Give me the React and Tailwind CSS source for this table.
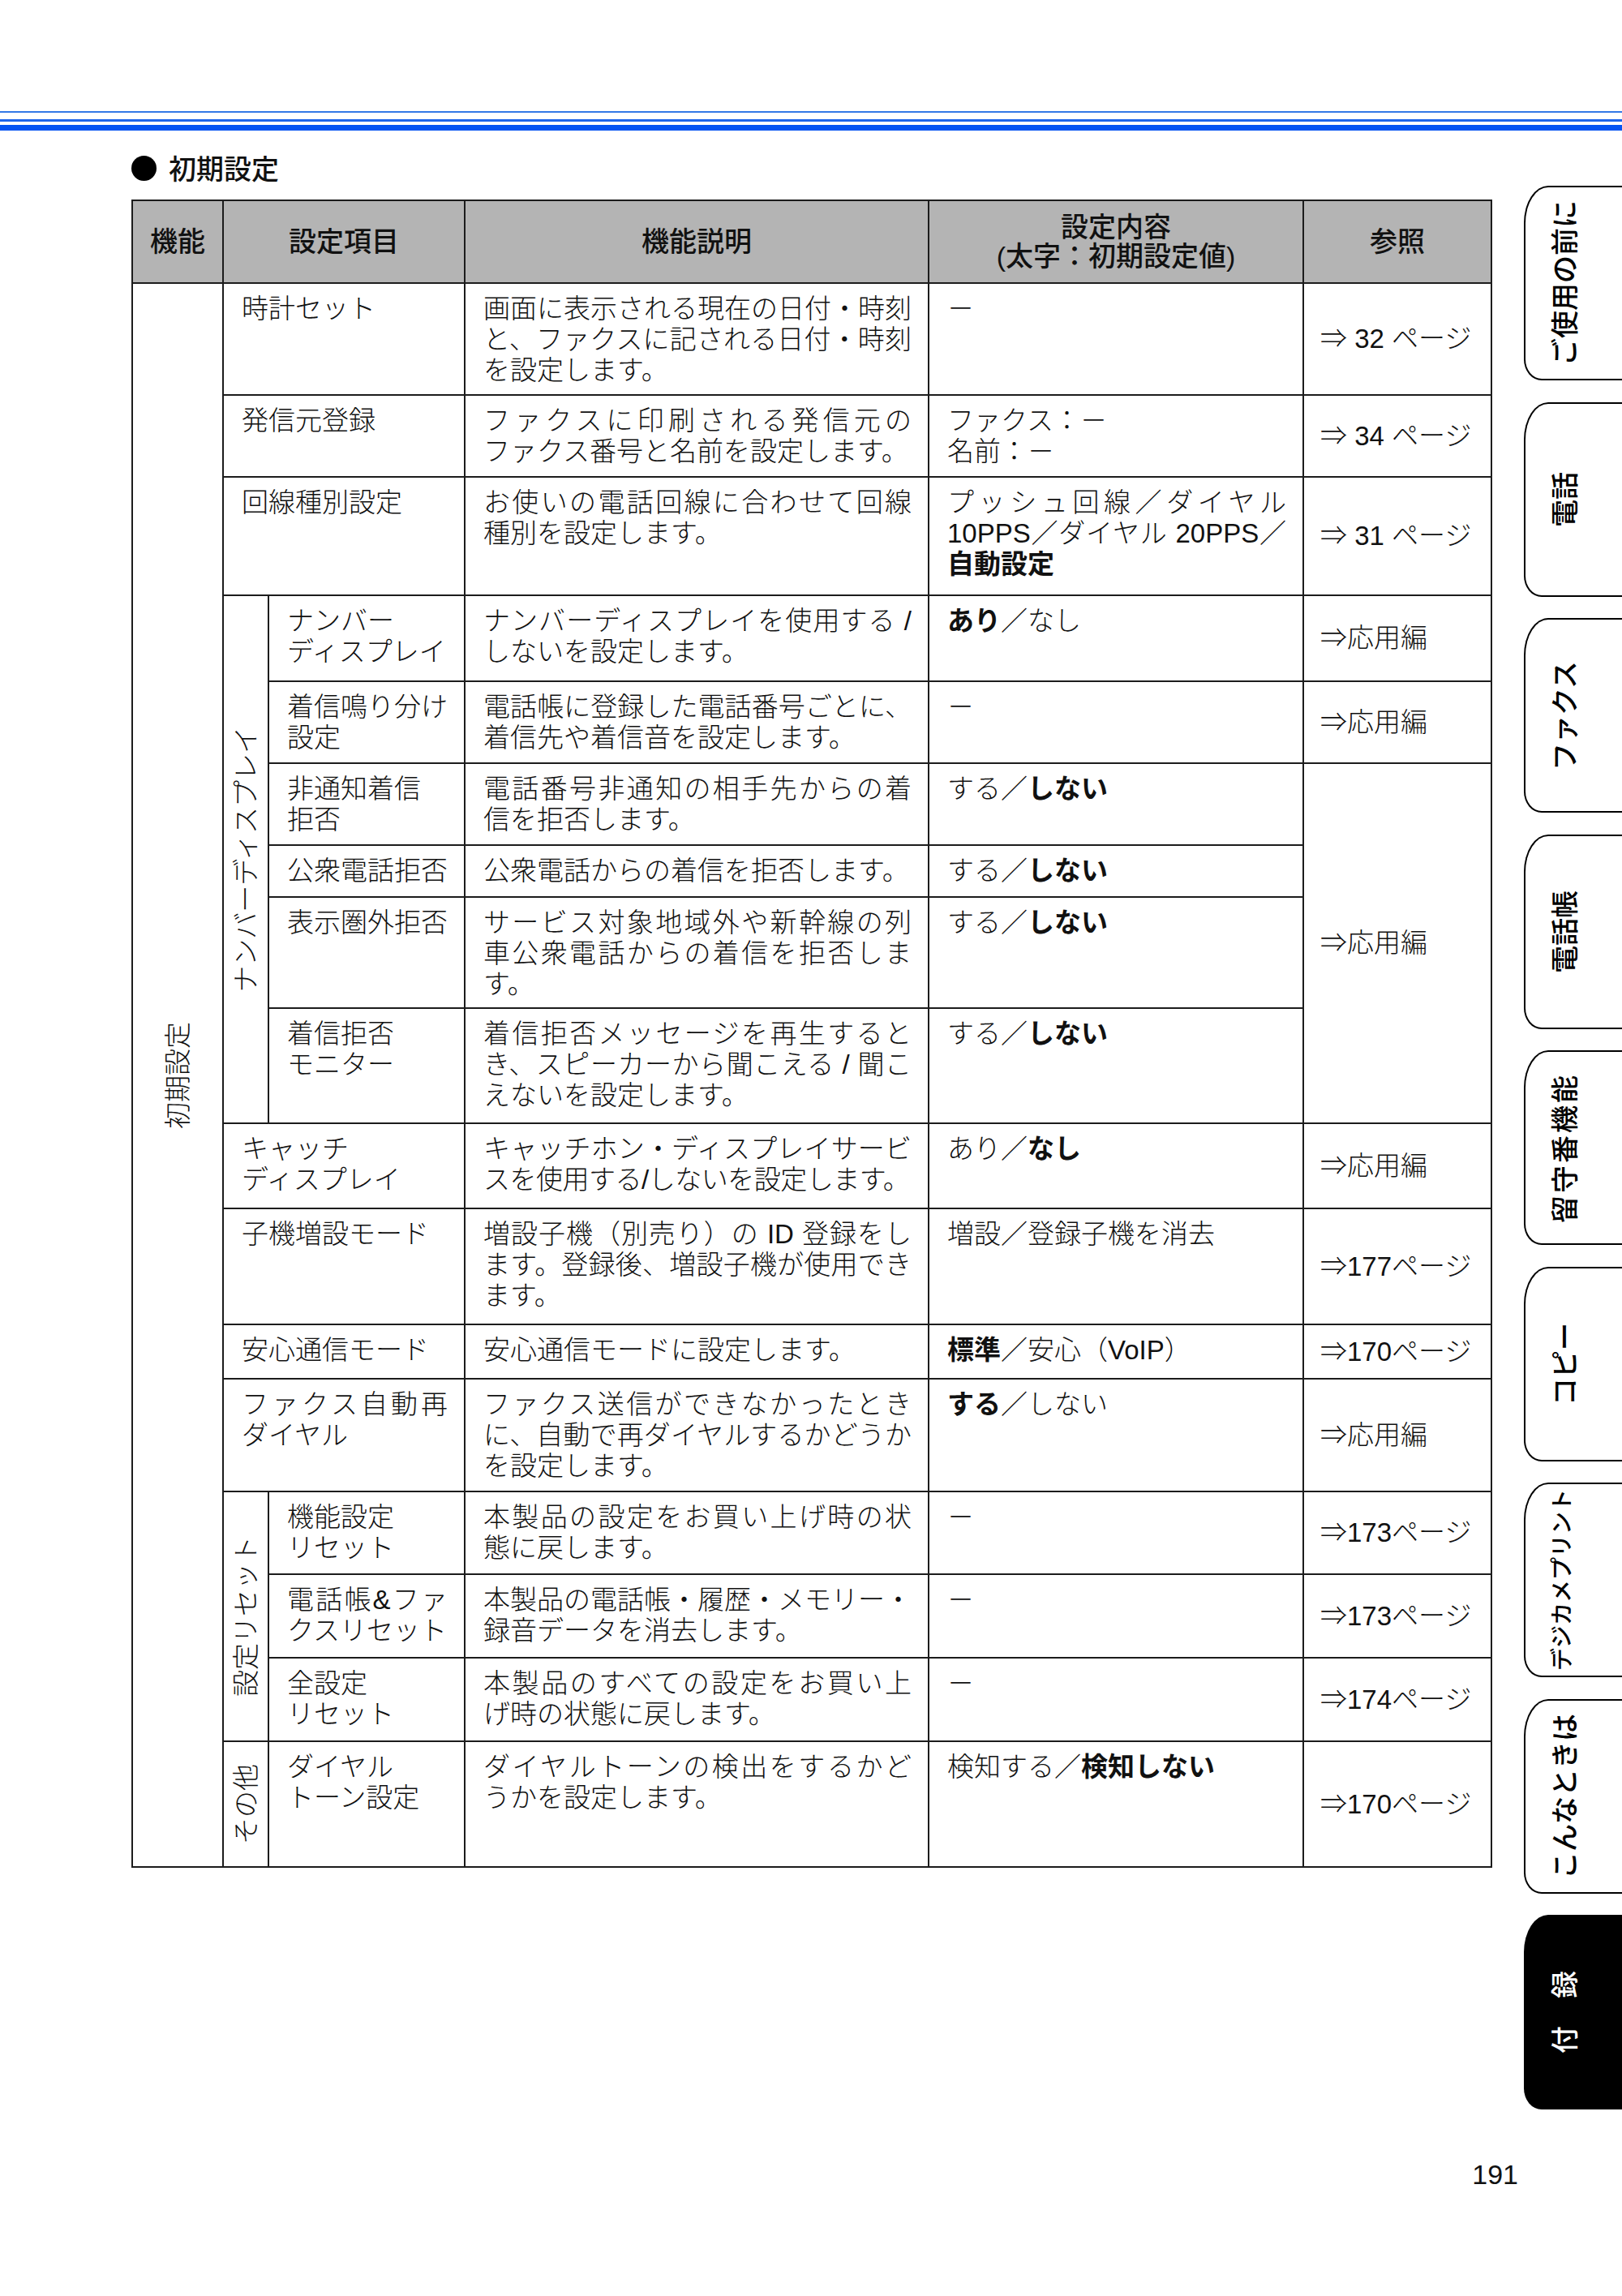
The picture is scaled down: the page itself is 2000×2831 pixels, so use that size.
import React from "react";

const J = "text-justify [text-align-last:justify]";
const B = "border-2 border-[#1c1c1c]";
const TXT = "pl-[22px] pr-[20px] pt-[12px] align-top";
const REF = "pl-[20px] pr-[8px] align-middle whitespace-nowrap";

function Lines({ lines, justify = true }) {
  return lines.map((l, i) => (
    <div key={i} className={justify && i < lines.length - 1 ? J : "whitespace-nowrap"}>
      {l}
    </div>
  ));
}

function VLabel({ children }) {
  return (
    <div className="flex justify-center">
      <div className="[writing-mode:vertical-rl] [text-orientation:sideways] rotate-180 leading-none">
        {children}
      </div>
    </div>
  );
}

const b = (t) => <span className="font-bold">{t}</span>;

function Row({ h, group, sub, item, itemJ = [], desc, val, valJ = false, ref_, refSpan }) {
  return (
    <tr className={h}>
      {group}
      <td className={`${B} ${TXT}`} colSpan={group || sub ? 1 : 2}>
        {item.map((l, i) => (
          <div key={i} className={itemJ.includes(i) ? J : "whitespace-nowrap"}>
            {l}
          </div>
        ))}
      </td>
      <td className={`${B} ${TXT}`}>
        <Lines lines={desc} />
      </td>
      <td className={`${B} ${TXT}`}>
        <Lines lines={val} justify={valJ} />
      </td>
      {ref_ !== undefined && (
        <td className={`${B} ${REF}`} rowSpan={refSpan || 1}>
          {ref_}
        </td>
      )}
    </tr>
  );
}

function Tabs() {
  const tabs = [
    ["ご使用の前に", "text-[34px]"],
    ["電話", "text-[34px]"],
    ["ファクス", "text-[34px]"],
    ["電話帳", "text-[34px]"],
    ["留守番機能", "text-[34px] tracking-[3px]"],
    ["コピー", "text-[34px]"],
    ["デジカメプリント", "text-[28px]"],
    ["こんなときは", "text-[34px]"],
    ["付　録", "text-[34px]"],
  ];
  return (
    <div className="mt-[68px] w-[123px] flex flex-col gap-[26.5px]">
      {tabs.map(([t, c], i) => {
        const black = i === tabs.length - 1;
        return (
          <div
            key={i}
            className={`h-[240px] border-2 border-r-0 border-black rounded-tl-[30px_46px] rounded-bl-[22px_26px] flex items-center pl-[32px] ${
              black ? "bg-black text-white" : "bg-white text-black"
            }`}
          >
            <span
              className={`[writing-mode:vertical-rl] [text-orientation:sideways] rotate-180 leading-none font-medium ${c}`}
            >
              {t}
            </span>
          </div>
        );
      })}
    </div>
  );
}

export default function App() {
  const ndGroup = (
    <td rowSpan={6} className={`${B} align-middle`}>
      <VLabel>ナンバーディスプレイ</VLabel>
    </td>
  );
  const resetGroup = (
    <td rowSpan={3} className={`${B} align-middle`}>
      <VLabel>設定リセット</VLabel>
    </td>
  );
  const otherGroup = (
    <td rowSpan={1} className={`${B} align-middle`}>
      <VLabel>その他</VLabel>
    </td>
  );

  return (
    <div className="w-[2000px] min-h-[2831px] bg-white text-[#111] font-['Liberation_Sans','Noto_Sans_CJK_JP',sans-serif] overflow-hidden">
      {/* top rules */}
      <div className="pt-[137px]">
        <div className="h-[2px] bg-[#3479e6]" />
        <div className="mt-[8px] h-[3px] bg-[#1c64ea]" />
        <div className="mt-[4px] h-[7px] bg-[#0453f2]" />
      </div>

      <div className="flex items-start">
        <div className="pl-[162px]">
          <div className="mt-[26px] mb-[19px] h-[40px] flex items-center gap-[15px] font-['Noto_Sans_CJK_JP',sans-serif]">
            <div className="w-[31px] h-[31px] rounded-full bg-black" />
            <div className="text-[34px] leading-[40px] font-medium">初期設定</div>
          </div>

          <table className="table-fixed border-collapse w-[1676px] text-[33px] leading-[38px] font-light">
            <colgroup>
              <col className="w-[112px]" />
              <col className="w-[56px]" />
              <col className="w-[242px]" />
              <col className="w-[572px]" />
              <col className="w-[462px]" />
              <col className="w-[232px]" />
            </colgroup>
            <thead>
              <tr className="h-[102px] bg-[#b4b4b4] text-[34px] leading-[36px]">
                <th className={`${B} font-medium`}>機能</th>
                <th className={`${B} font-medium`} colSpan={2}>設定項目</th>
                <th className={`${B} font-medium`}>機能説明</th>
                <th className={`${B} font-medium`}>
                  <div>設定内容</div>
                  <div>(太字：初期設定値)</div>
                </th>
                <th className={`${B} font-medium`}>参照</th>
              </tr>
            </thead>
            <tbody>
              <tr className="h-[138px]">
                <td rowSpan={17} className={`${B} align-middle`}>
                  <VLabel>初期設定</VLabel>
                </td>
                <td className={`${B} ${TXT}`} colSpan={2}>
                  時計セット
                </td>
                <td className={`${B} ${TXT}`}>
                  <Lines
                    lines={[
                      "画面に表示される現在の日付・時刻",
                      "と、ファクスに記される日付・時刻",
                      "を設定します。",
                    ]}
                  />
                </td>
                <td className={`${B} ${TXT}`}>－</td>
                <td className={`${B} ${REF}`}>⇒ 32 ページ</td>
              </tr>
              <Row
                h="h-[101px]"
                item={["発信元登録"]}
                desc={["ファクスに印刷される発信元の", "ファクス番号と名前を設定します。"]}
                val={["ファクス：－", "名前：－"]}
                ref_="⇒ 34 ページ"
              />
              <Row
                h="h-[146px]"
                item={["回線種別設定"]}
                desc={["お使いの電話回線に合わせて回線", "種別を設定します。"]}
                val={["プッシュ回線／ダイヤル", "10PPS／ダイヤル 20PPS／", b("自動設定")]}
                valJ
                ref_="⇒ 31 ページ"
              />
              <Row
                h="h-[106px]"
                group={ndGroup}
                item={["ナンバー", "ディスプレイ"]}
                desc={["ナンバーディスプレイを使用する /", "しないを設定します。"]}
                val={[<>{b("あり")}／なし</>]}
                ref_="⇒応用編"
              />
              <Row
                h="h-[101px]"
                sub
                item={["着信鳴り分け", "設定"]}
                itemJ={[0]}
                desc={["電話帳に登録した電話番号ごとに、", "着信先や着信音を設定します。"]}
                val={["－"]}
                ref_="⇒応用編"
              />
              <Row
                h="h-[101px]"
                sub
                item={["非通知着信", "拒否"]}
                desc={["電話番号非通知の相手先からの着", "信を拒否します。"]}
                val={[<>する／{b("しない")}</>]}
                ref_="⇒応用編"
                refSpan={4}
              />
              <Row
                h="h-[64px]"
                sub
                item={["公衆電話拒否"]}
                desc={["公衆電話からの着信を拒否します。"]}
                val={[<>する／{b("しない")}</>]}
              />
              <Row
                h="h-[137px]"
                sub
                item={["表示圏外拒否"]}
                desc={[
                  "サービス対象地域外や新幹線の列",
                  "車公衆電話からの着信を拒否しま",
                  "す。",
                ]}
                val={[<>する／{b("しない")}</>]}
              />
              <Row
                h="h-[142px]"
                sub
                item={["着信拒否", "モニター"]}
                desc={[
                  "着信拒否メッセージを再生すると",
                  "き、スピーカーから聞こえる / 聞こ",
                  "えないを設定します。",
                ]}
                val={[<>する／{b("しない")}</>]}
              />
              <Row
                h="h-[105px]"
                item={["キャッチ", "ディスプレイ"]}
                desc={[
                  "キャッチホン・ディスプレイサービ",
                  <span className="tracking-[-0.5px]">スを使用する/しないを設定します。</span>,
                ]}
                val={[<>あり／{b("なし")}</>]}
                ref_="⇒応用編"
              />
              <Row
                h="h-[143px]"
                item={["子機増設モード"]}
                desc={[
                  "増設子機（別売り）の ID 登録をし",
                  "ます。登録後、増設子機が使用でき",
                  "ます。",
                ]}
                val={["増設／登録子機を消去"]}
                ref_="⇒177ページ"
              />
              <Row
                h="h-[67px]"
                item={["安心通信モード"]}
                desc={["安心通信モードに設定します。"]}
                val={[<>{b("標準")}／安心（VoIP）</>]}
                ref_="⇒170ページ"
              />
              <Row
                h="h-[139px]"
                item={["ファクス自動再", "ダイヤル"]}
                itemJ={[0]}
                desc={[
                  "ファクス送信ができなかったとき",
                  "に、自動で再ダイヤルするかどうか",
                  "を設定します。",
                ]}
                val={[<>{b("する")}／しない</>]}
                ref_="⇒応用編"
              />
              <Row
                h="h-[102px]"
                group={resetGroup}
                item={["機能設定", "リセット"]}
                desc={["本製品の設定をお買い上げ時の状", "態に戻します。"]}
                val={["－"]}
                ref_="⇒173ページ"
              />
              <Row
                h="h-[103px]"
                sub
                item={["電話帳&ファ", "クスリセット"]}
                itemJ={[0]}
                desc={["本製品の電話帳・履歴・メモリー・", "録音データを消去します。"]}
                val={["－"]}
                ref_="⇒173ページ"
              />
              <Row
                h="h-[103px]"
                sub
                item={["全設定", "リセット"]}
                desc={["本製品のすべての設定をお買い上", "げ時の状態に戻します。"]}
                val={["－"]}
                ref_="⇒174ページ"
              />
              <Row
                h="h-[155px]"
                group={otherGroup}
                item={["ダイヤル", "トーン設定"]}
                desc={["ダイヤルトーンの検出をするかど", "うかを設定します。"]}
                val={[<>検知する／{b("検知しない")}</>]}
                ref_="⇒170ページ"
              />
            </tbody>
          </table>
        </div>
        <div className="ml-[39px]">
          <Tabs />
        </div>
      </div>

      <div className="mt-[63px] pr-[128px] text-right text-[34px] leading-none">191</div>
    </div>
  );
}
